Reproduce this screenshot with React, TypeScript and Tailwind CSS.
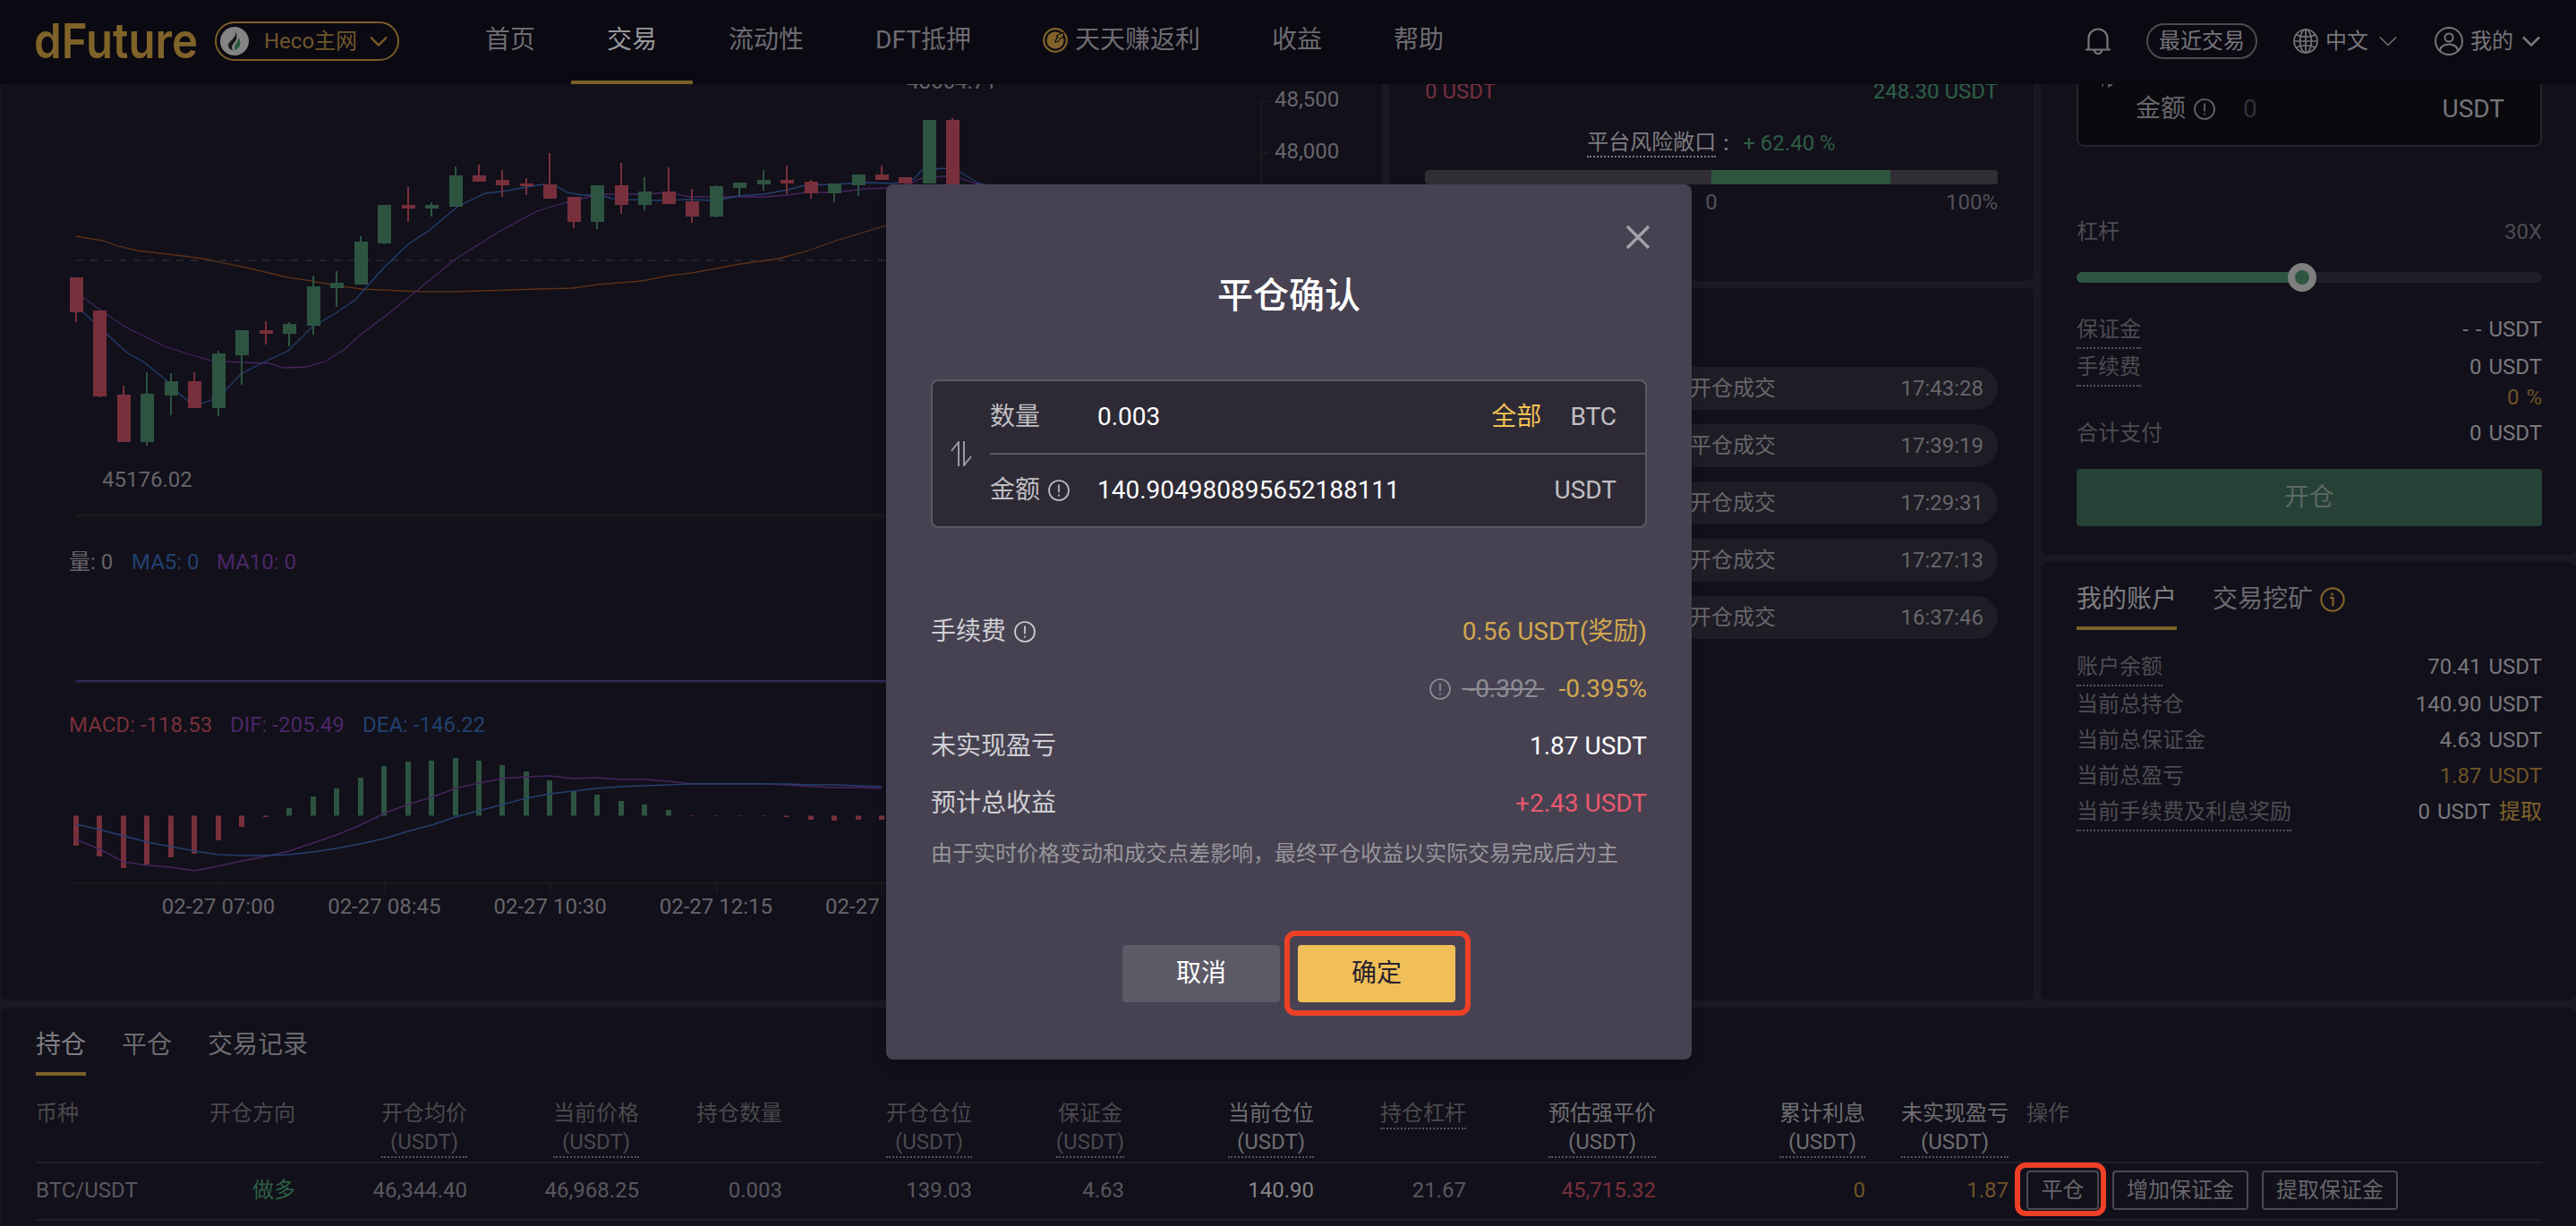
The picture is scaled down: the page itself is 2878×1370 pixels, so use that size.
import type { ReactNode } from "react";

const RED = "#77303b";
const GREEN = "#2d5441";

// [up, bodyTop, bodyBottom, wickTop, wickBottom]
const candles: [number, number, number, number, number][] = [
  [0, 310, 349, 310, 360],
  [0, 347, 443, 347, 444],
  [0, 441, 494, 431, 494],
  [1, 440, 494, 416, 498],
  [1, 426, 442, 417, 464],
  [0, 426, 456, 416, 456],
  [1, 395, 456, 392, 465],
  [1, 369, 397, 369, 430],
  [0, 369, 373, 359, 385],
  [1, 362, 373, 360, 387],
  [1, 320, 364, 308, 374],
  [1, 316, 322, 303, 343],
  [1, 270, 318, 264, 318],
  [1, 229, 272, 229, 273],
  [0, 229, 233, 209, 248],
  [1, 229, 233, 226, 242],
  [1, 196, 231, 186, 231],
  [0, 196, 203, 184, 203],
  [0, 201, 207, 190, 220],
  [0, 205, 208, 199, 218],
  [0, 206, 222, 171, 222],
  [0, 220, 248, 220, 255],
  [1, 207, 248, 207, 256],
  [0, 207, 229, 182, 239],
  [1, 214, 229, 198, 235],
  [0, 214, 228, 187, 228],
  [0, 225, 242, 211, 249],
  [1, 208, 242, 207, 243],
  [1, 204, 210, 204, 219],
  [1, 201, 206, 190, 213],
  [0, 201, 205, 185, 217],
  [0, 203, 216, 201, 222],
  [1, 205, 216, 205, 226],
  [1, 195, 207, 195, 219],
  [0, 195, 201, 185, 201],
  [0, 198, 205, 198, 208],
  [1, 134, 205, 134, 205],
  [0, 134, 240, 132, 240],
];

const macd = [
  945, 957, 970, 966, 958, 954, 939, 924, 913, 903, 890, 881, 869, 856, 851, 850, 847, 850, 855, 862, 872, 884, 888,
  895, 899, 905, 912, 911, 911, 911, 913, 916, 917, 916, 916,
];

const dif = [
  938, 949, 963, 967, 969, 973, 968, 962, 957, 951, 942, 933, 922, 909, 899, 891, 881, 875, 870, 868, 867, 870, 869,
  871, 871, 873, 876, 876, 876, 876, 877, 879, 880, 880, 881,
];

const dea = [
  921, 927, 934, 941, 946, 951, 955, 956, 956, 955, 952, 948, 943, 937, 929, 922, 913, 906, 899, 892, 887, 884, 881,
  879, 878, 877, 876, 876, 876, 876, 876, 877, 877, 878, 879,
];

const ma5 =
  "85,341 92,348 104,359 120,374 143,395 160,404 186,425 198,438 210,448 225,451 236,447 251,437 269,418 294,405 322,392 348,366 375,350 397,335 428,300 456,273 480,257 511,231 542,216 561,214 600,207 607,206 622,208 633,215 650,218 670,218 685,222 700,223 733,224 767,223 800,224 825,219 853,217 880,212 900,207 933,206 967,204 997,205 1015,203 1021,200 1030,190 1055,188 1072,192 1092,204 1104,208";
const ma10 =
  "85,327 92,332 120,352 143,367 184,387 212,396 236,403 269,405 301,406 317,411 342,410 363,404 384,391 404,373 432,352 463,327 508,290 559,258 600,236 613,232 633,226 662,219 677,217 720,217 747,215 770,220 800,220 853,220 880,218 900,215 933,215 967,211 993,210 1015,206 1030,199 1055,197 1072,199 1090,205 1108,207";
const ma30 =
  "85,264 115,269 132,275 153,280 205,286 232,290 270,298 322,310 348,314 375,319 404,323 473,326 508,326 600,323 640,322 667,318 717,314 747,308 773,305 827,295 870,289 900,281 937,268 990,252 1040,238";

const xAt = (i: number) => 85 + i * 26.47;
const toPoints = (ys: number[]) => ys.map((y, i) => `${xAt(i)},${y}`).join(" ");

const timeLabels = ["02-27 07:00", "02-27 08:45", "02-27 10:30", "02-27 12:15", "02-27 14:00"];

const trades = [
  { type: "开仓成交", time: "17:43:28" },
  { type: "平仓成交", time: "17:39:19" },
  { type: "开仓成交", time: "17:29:31" },
  { type: "开仓成交", time: "17:27:13" },
  { type: "开仓成交", time: "16:37:46" },
];

type Column = { title: string; unit?: boolean; dotted?: boolean; head?: string; value: string; color: string };

const columns: Column[] = [
  { title: "开仓方向", value: "做多", color: "text-[#2d5f45]" },
  { title: "开仓均价", unit: true, dotted: true, value: "46,344.40", color: "text-[#59575e]" },
  { title: "当前价格", unit: true, dotted: true, value: "46,968.25", color: "text-[#59575e]" },
  { title: "持仓数量", value: "0.003", color: "text-[#59575e]" },
  { title: "开仓仓位", unit: true, dotted: true, value: "139.03", color: "text-[#59575e]" },
  { title: "保证金", unit: true, dotted: true, value: "4.63", color: "text-[#59575e]" },
  { title: "当前仓位", unit: true, dotted: true, head: "text-[#6e6d71]", value: "140.90", color: "text-[#858488]" },
  { title: "持仓杠杆", dotted: true, value: "21.67", color: "text-[#59575e]" },
  { title: "预估强平价", unit: true, dotted: true, head: "text-[#6e6d71]", value: "45,715.32", color: "text-[#77303b]" },
  { title: "累计利息", unit: true, dotted: true, head: "text-[#6e6d71]", value: "0", color: "text-[#6e5426]" },
  { title: "未实现盈亏", unit: true, dotted: true, head: "text-[#6e6d71]", value: "1.87", color: "text-[#6e5426]" },
];

const GRID = "grid grid-cols-[98px_192px_192px_192px_160px_212px_170px_212px_170px_212px_234px_160px_1fr]";

function AlertIcon({ size = 24 }: { size?: number }) {
  return (
    <svg width={size} height={size} viewBox="0 0 24 24" fill="none" stroke="currentColor" strokeWidth="1.7">
      <circle cx="12" cy="12" r="11" />
      <path d="M12 5.5v8.8M12 16.6v2" />
    </svg>
  );
}

function Chevron({ width = 2 }: { width?: number }) {
  return (
    <svg width="20" height="12" viewBox="0 0 20 12" fill="none" stroke="currentColor" strokeWidth={width}>
      <path d="M1 1.5l9 9 9-9" />
    </svg>
  );
}

function NavItem({ active, children }: { active?: boolean; children: ReactNode }) {
  return (
    <div
      className={
        active
          ? "h-full px-10 flex items-center border-b-4 border-[#7c6029] text-[#98979b]"
          : "h-full px-10 flex items-center border-b-4 border-transparent text-[#6d6c71]"
      }
    >
      {children}
    </div>
  );
}

function Header() {
  return (
    <header className="h-[94px] shrink-0 bg-[#0b0912] flex items-center pl-10 pr-10">
      <svg width="182" height="64" viewBox="0 -8 182 64" className="shrink-0 overflow-visible">
        <text
          x="-2"
          y="42"
          textLength="183"
          lengthAdjust="spacingAndGlyphs"
          fontFamily="Inter, sans-serif"
          fontWeight="600"
          fontSize="54"
          fill="#806329"
        >
          dFuture
        </text>
      </svg>
      <div className="ml-[18px] -mt-0.5 w-[206px] h-11 border-2 border-[#7a5e28] rounded-full flex items-center pl-1 text-2xl text-[#6f562a]">
        <svg width="32" height="32" viewBox="0 0 32 32">
          <circle cx="16" cy="16" r="16" fill="#848484" />
          <path d="M17 5c1 3 0 5-2.500 8S9 18 9 20.500c0 3 2 5 5 6-1-2.500-1.500-4.500.500-7.500 2-2.500 4-4.500 4-8 0-2.500-.500-4.500-1.500-6z" fill="#15161b" />
          <path d="M20.500 12c3 4.500 3 11-4 14-1-3-.500-5 1.500-7.500 1.500-2 2.500-4 2.500-6.500z" fill="#28573b" />
        </svg>
        <span className="ml-[17px]">Heco主网</span>
        <span className="ml-3.5 text-[#7a5e28]">
          <Chevron width={2.4} />
        </span>
      </div>
      <nav className="h-full ml-[56px] flex text-[28px]">
        <NavItem>首页</NavItem>
        <NavItem active>交易</NavItem>
        <NavItem>流动性</NavItem>
        <NavItem>DFT抵押</NavItem>
        <NavItem>
          <svg width="28" height="28" viewBox="0 0 28 28" className="mr-2">
            <circle cx="14" cy="14" r="12.8" fill="none" stroke="#80622a" strokeWidth="2.2" />
            <circle cx="14" cy="14" r="9.6" fill="#80622a" />
            <path d="M13 17l2-6 7-5 2 5-6 1-2 4z" fill="#0b0912" />
            <path d="M14 15l3-5-2-1 9-4-2 7-2-1-3 5z" fill="#80622a" stroke="#0b0912" strokeWidth="1" />
          </svg>
          天天赚返利
        </NavItem>
        <NavItem>收益</NavItem>
        <NavItem>帮助</NavItem>
      </nav>
      <div className="ml-auto -mt-0.5 flex items-center text-2xl text-[#77767a]">
        <svg width="28" height="30" viewBox="0 0 28 30" fill="none" stroke="currentColor" strokeWidth="2.2">
          <path d="M3.500 24.500V12a10.500 10.500 0 0 1 21 0v12.500M0 24.500h28M10 25.500a4 3.500 0 0 0 8 0" />
        </svg>
        <div className="ml-10 w-[124px] h-10 border-2 border-[#4d4b50] rounded-full flex items-center justify-center">
          最近交易
        </div>
        <svg
          width="28"
          height="28"
          viewBox="0 0 28 28"
          fill="none"
          stroke="currentColor"
          strokeWidth="1.7"
          className="ml-10 mr-2"
        >
          <circle cx="14" cy="14" r="13" />
          <ellipse cx="14" cy="14" rx="6.500" ry="13" />
          <path d="M14 1v26M1 14h26M3.500 7c6 3 15 3 21 0M3.500 21c6-3 15-3 21 0" />
        </svg>
        中文
        <span className="ml-3 mr-[42px]">
          <Chevron width={1.5} />
        </span>
        <svg
          width="32"
          height="32"
          viewBox="0 0 32 32"
          fill="none"
          stroke="currentColor"
          strokeWidth="2"
          className="mr-2"
        >
          <circle cx="16" cy="16" r="15" />
          <circle cx="16" cy="12" r="4.600" />
          <path d="M6 27c0-10 20-10 20 0" />
        </svg>
        我的
        <span className="ml-2.5">
          <Chevron width={2.6} />
        </span>
      </div>
    </header>
  );
}

function ChartPanel() {
  return (
    <section className="w-[1543px] shrink-0 bg-[#12101a] rounded-b-lg overflow-hidden">
      <svg width="1543" height="1024" viewBox="1 94 1543 1024" fontSize="24" fill="#66656a">
        <g stroke="#1b1a1c" strokeWidth="2" fill="none">
          <path d="M1418 113h-9v500M1409 171h9" />
          <path d="M83 576h1326" strokeWidth="3" />
          <path d="M83 763h1326M84 987h1326" />
          <path d="M244.500 987v10M429.500 987v10M615 987v10M801 987v10M985.500 987v10" />
        </g>
        <path d="M85 291h1324" stroke="#25242d" strokeWidth="2" strokeDasharray="8 8" />
        <path d="M85 761h1324" stroke="#302a60" strokeWidth="2" />
        <g fill="none" strokeWidth="1.3">
          <polyline points={ma30} stroke="#5b3119" />
          <polyline points={ma10} stroke="#45265f" />
          <polyline points={ma5} stroke="#234070" />
        </g>
        {candles.map(([up, top, bottom, high, low], i) => {
          const x = Math.round(xAt(i));
          return (
            <g key={i} fill={up ? GREEN : RED}>
              <rect x={x - 7} y={top} width="15" height={bottom - top} />
              <rect x={x - 1} y={high} width="2" height={low - high} />
            </g>
          );
        })}
        {macd.map((y, i) => (
          <rect
            key={i}
            x={Math.round(xAt(i)) - 3}
            y={Math.min(y, 911.5)}
            width="6"
            height={Math.abs(y - 911.5)}
            fill={y > 911.5 ? RED : GREEN}
          />
        ))}
        <g fill="none" strokeWidth="1.4">
          <polyline points={toPoints(dif)} stroke="#45265f" />
          <polyline points={toPoints(dea)} stroke="#234070" />
        </g>
        <text x="1013" y="99">48664.71</text>
        <text x="1424" y="119">48,500</text>
        <text x="1424" y="177">48,000</text>
        <text x="114" y="544">45176.02</text>
        <text x="77" y="636">量: 0</text>
        <text x="147" y="636" fill="#22406f">MA5: 0</text>
        <text x="242" y="636" fill="#4a2768">MA10: 0</text>
        <text x="77" y="818" fill={RED}>MACD: -118.53</text>
        <text x="257" y="818" fill="#4a2768">DIF: -205.49</text>
        <text x="405" y="818" fill="#22406f">DEA: -146.22</text>
        {timeLabels.map((label, i) => (
          <text key={label} x={244 + i * 185.3} y="1021" textAnchor="middle">
            {label}
          </text>
        ))}
      </svg>
    </section>
  );
}

function MiddleColumn() {
  return (
    <div className="w-[720px] shrink-0 flex flex-col gap-2">
      <section className="h-[220px] bg-[#12101a] rounded-b-lg px-10 text-2xl leading-8 overflow-hidden">
        <div className="-mt-2 flex justify-between">
          <span className="text-[#77303b]">0 USDT</span>
          <span className="text-[#2d5f45]">248.30 USDT</span>
        </div>
        <div className="mt-[26px] flex justify-center text-[#7d7c80]">
          <span className="h-8 leading-[31px] border-b-2 border-dotted border-[#7d7c80]">平台风险敞口</span>
          <span className="w-[30px] pl-2 font-medium">:</span>
          <span className="text-[#2d5f45]">+ 62.40 %</span>
        </div>
        <div className="mt-3.5 h-4 rounded bg-[#312f35] overflow-hidden">
          <div className="ml-[320px] w-[200px] h-full bg-[#2d5641]" />
        </div>
        <div className="mt-1 flex justify-between text-[#525157]">
          <span className="w-20">-100%</span>
          <span>0</span>
          <span className="w-20 text-right">100%</span>
        </div>
      </section>
      <section className="flex-1 bg-[#12101a] rounded-lg px-10 pt-[88px] flex flex-col gap-4 text-2xl text-[#67666b]">
        {trades.map((trade) => (
          <div key={trade.time} className="h-12 rounded-full bg-[#1e1c25] flex items-center justify-between pl-[296px] pr-4">
            <span>{trade.type}</span>
            <span>{trade.time}</span>
          </div>
        ))}
      </section>
    </div>
  );
}

function Row({ label, dotted, children }: { label: string; dotted?: boolean; children: ReactNode }) {
  return (
    <div className="flex items-start justify-between">
      <span className={dotted ? "h-[38px] border-b-2 border-dotted border-[#55545a]" : ""}>{label}</span>
      <span className="text-[#7a797d] [word-spacing:2px]">{children}</span>
    </div>
  );
}

function Tab({ active, children }: { active?: boolean; children: ReactNode }) {
  return (
    <div
      className={
        active
          ? "h-[76px] pt-3 flex items-center border-b-4 border-[#7c6029] text-[#7d7c80]"
          : "h-[76px] pt-3 flex items-center border-b-4 border-transparent text-[#6b6a6f]"
      }
    >
      {children}
    </div>
  );
}

function RightColumn() {
  return (
    <div className="flex-1 flex flex-col gap-2 text-2xl leading-8 text-[#4d4c52]">
      <section className="h-[526px] bg-[#12101a] rounded-b-lg pl-10 pr-[38px]">
        <div className="h-[70px] bg-[#0a0a0e] border-2 border-t-0 border-[#25242a] rounded-b-lg pl-[26px] pr-10 flex text-[28px] text-[#67666b]">
          <svg width="14" height="4" viewBox="0 0 14 4" stroke="currentColor" strokeWidth="1.6" fill="none">
            <path d="M1 0v2.500M8 0v2.500l4-2.500" />
          </svg>
          <div className="ml-6 flex-1 h-14 flex items-center">
            金额
            <span className="ml-[9px]">
              <AlertIcon />
            </span>
            <span className="ml-[31px] text-[#302f34]">0</span>
            <span className="ml-auto text-[#77767a]">USDT</span>
          </div>
        </div>
        <div className="mt-[79px] flex justify-between">
          <span>杠杆</span>
          <span>30X</span>
        </div>
        <div className="mt-[23px] h-6 flex items-center">
          <div className="h-3 w-[240px] rounded-l-full bg-[#2d5641]" />
          <div className="w-8 h-8 -mx-1 rounded-full border-8 border-[#7f7f80] bg-[#2d5641] z-10" />
          <div className="h-3 flex-1 rounded-r-full bg-[#201e27]" />
        </div>
        <div className="mt-[30px] flex flex-col gap-1">
          <Row label="保证金" dotted>
            - - USDT
          </Row>
          <Row label="手续费" dotted>
            0 USDT
          </Row>
        </div>
        <div className="-mt-1 text-right text-[#6e5426] [word-spacing:2px]">0 %</div>
        <div className="mt-2">
          <Row label="合计支付">0 USDT</Row>
        </div>
        <button className="mt-6 w-full h-16 rounded bg-[#264136] text-[28px] text-[#5c6763]">开仓</button>
      </section>
      <section className="flex-1 bg-[#12101a] rounded-lg pl-10 pr-[38px]">
        <div className="flex gap-10 text-[28px]">
          <Tab active>我的账户</Tab>
          <Tab>
            交易挖矿
            <svg width="28" height="28" viewBox="0 0 28 28" fill="none" stroke="#80622a" strokeWidth="2.200" className="ml-2">
              <circle cx="14" cy="14" r="12.600" />
              <path d="M11 12h3.500v9.500M13.500 6.500v3" />
            </svg>
          </Tab>
        </div>
        <div className="mt-[25px]">
          <Row label="账户余额" dotted>
            70.41 USDT
          </Row>
          <div className="mt-1 flex flex-col gap-2">
            <Row label="当前总持仓">140.90 USDT</Row>
            <Row label="当前总保证金">4.63 USDT</Row>
            <Row label="当前总盈亏">
              <span className="text-[#6e5426]">1.87 USDT</span>
            </Row>
            <Row label="当前手续费及利息奖励" dotted>
              0 USDT <span className="ml-0.5 text-[#80622a]">提取</span>
            </Row>
          </div>
        </div>
      </section>
    </div>
  );
}

function PositionsPanel() {
  return (
    <section className="mt-2 ml-px h-[244px] shrink-0 bg-[#12101a] rounded-t-lg pl-[39px] pr-[38px]">
      <div className="flex gap-10 text-[28px]">
        <Tab active>持仓</Tab>
        <Tab>平仓</Tab>
        <Tab>交易记录</Tab>
      </div>
      <div className={`${GRID} h-[98px] pt-[26px] border-b-2 border-[#201e27] text-2xl leading-8 text-[#4a494e]`}>
        <span>币种</span>
        {columns.map((col) => (
          <div key={col.title} className="flex justify-end items-start">
            <div
              className={`text-center whitespace-nowrap ${col.head ?? ""} ${col.dotted ? "border-b-2 border-dotted border-[#55545a]" : ""}`}
            >
              <div>{col.title}</div>
              {col.unit && <div>(USDT)</div>}
            </div>
          </div>
        ))}
        <span className="pl-5">操作</span>
      </div>
      <div className={`${GRID} h-16 items-center border-b-2 border-[#201e27] text-2xl leading-8 pb-0.5`}>
        <span className="text-[#59575e] whitespace-nowrap">BTC/USDT</span>
        {columns.map((col) => (
          <span key={col.title} className={`text-right ${col.color}`}>
            {col.value}
          </span>
        ))}
        <div className="pl-5 flex gap-[15px] text-[#67666b]">
          <div className="relative">
            <button className="w-[81px] h-11 border-2 border-[#4b4a50] rounded">平仓</button>
            <div className="absolute -left-[13px] -top-[9px] w-[102px] h-[60px] border-[6px] border-[#ee4026] rounded-xl" />
          </div>
          <button className="w-[152px] h-11 border-2 border-[#4b4a50] rounded">增加保证金</button>
          <button className="w-[152px] h-11 border-2 border-[#4b4a50] rounded">提取保证金</button>
        </div>
      </div>
    </section>
  );
}

function CloseDialog() {
  return (
    <div className="absolute left-[990px] top-[206px] w-[900px] h-[978px] rounded-lg bg-[#464252] px-[50px] pt-[94px] text-[28px] text-[#cfced2] shadow-lg z-20">
      <svg
        width="28"
        height="28"
        viewBox="0 0 28 28"
        className="absolute right-[46px] top-[45px]"
        stroke="#a3a1a9"
        strokeWidth="3.4"
      >
        <path d="M2 2l24 24M26 2L2 26" />
      </svg>
      <h2 className="h-[58px] leading-[62px] text-center text-[40px] font-medium text-white">平仓确认</h2>

      <div className="mt-[66px] h-[166px] border-2 border-[#5c5966] rounded-lg bg-[#2d2a35] flex">
        <div className="w-16 flex items-center pl-5">
          <svg width="24" height="28" viewBox="0 0 24 28" fill="none" stroke="#9b99a1" strokeWidth="2">
            <path d="M1 11L9 1v27M15 0v27l8-10" />
          </svg>
        </div>
        <div className="flex-1">
          <div className="h-20 flex items-center pr-8">
            <span className="w-[120px] text-[#c0bfc3]">数量</span>
            <span className="text-white">0.003</span>
            <span className="ml-auto text-[#f0c055]">全部</span>
            <span className="ml-8 text-[#c0bfc3]">BTC</span>
          </div>
          <div className="h-0.5 bg-[#5c5966]" />
          <div className="h-20 flex items-center pr-8 text-[#c0bfc3]">
            <span className="w-[120px] flex items-center gap-[9px]">
              金额
              <AlertIcon />
            </span>
            <span className="text-white">140.904980895652188111</span>
            <span className="ml-auto">USDT</span>
          </div>
        </div>
      </div>

      <div className="mt-[84px]">
        <div className="h-16 flex items-center">
          手续费
          <span className="ml-[9px]">
            <AlertIcon />
          </span>
          <span className="ml-auto text-[#d2a74f]">0.56 USDT(奖励)</span>
        </div>
        <div className="h-16 flex items-center justify-end text-[#8e8c95]">
          <AlertIcon />
          <span className="ml-3 whitespace-pre line-through">{" -0.392 "}</span>
          <span className="ml-4 text-[#d2a74f]">-0.395%</span>
        </div>
        <div className="h-16 flex items-center justify-between">
          未实现盈亏
          <span className="text-white">1.87 USDT</span>
        </div>
        <div className="h-16 flex items-center justify-between">
          预计总收益
          <span className="text-[#e9596f]">+2.43 USDT</span>
        </div>
      </div>
      <p className="h-12 leading-[48px] text-2xl text-[#98969a]">
        由于实时价格变动和成交点差影响，最终平仓收益以实际交易完成后为主
      </p>

      <div className="mt-[78px] flex justify-center gap-5">
        <button className="w-44 h-16 rounded bg-[#5d5a68] text-white">取消</button>
        <div className="relative">
          <button className="w-44 h-16 rounded bg-[#f0bf58] text-[#25222e]">确定</button>
          <div className="absolute -left-[15px] -top-4 w-[208px] h-[95px] border-[6px] border-[#ee4026] rounded-xl" />
        </div>
      </div>
    </div>
  );
}

export default function App() {
  return (
    <div className="relative w-[2878px] h-[1370px] overflow-hidden flex flex-col bg-[#1a1822] font-[Roboto,'Noto_Sans_CJK_SC',sans-serif]">
      <Header />
      <main className="h-[1024px] shrink-0 flex gap-2 pl-px">
        <ChartPanel />
        <MiddleColumn />
        <RightColumn />
      </main>
      <PositionsPanel />
      <CloseDialog />
    </div>
  );
}
